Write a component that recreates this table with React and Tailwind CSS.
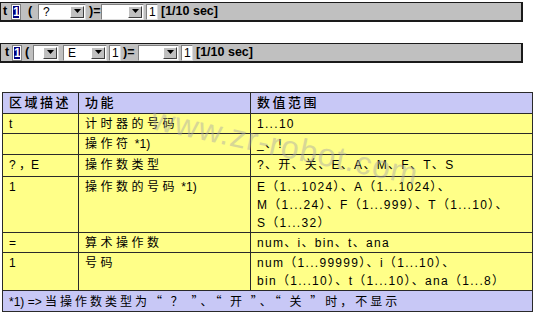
import React from 'react';

const Arrow = () => (
  <svg width="7" height="6" viewBox="0 0 7 6">
    <path d="M0 0h7L3.5 4z" fill="#000" />
  </svg>
);

function Combo({ className, children }) {
  return (
    <div className={`flex h-[16px] bg-white border border-[#808080] border-r-[#dcdcdc] border-b-[#dcdcdc] ${className}`}>
      <div className="flex-1 pl-[4px] text-[12px] leading-[14px] font-normal">{children}</div>
      <div className="w-[14px] my-[1px] mr-[1px] bg-[#c0c0c0] border border-t-white border-l-white border-r-[#404040] border-b-[#404040] flex items-center justify-center">
        <Arrow />
      </div>
    </div>
  );
}

function Num({ className, selected }) {
  if (selected) {
    return (
      <div className={`h-[16px] w-[10px] border border-[#808080] bg-white p-[1px] ${className}`}>
        <div className="h-full bg-[#000080] text-white text-[12px] leading-[12px] font-bold text-center">1</div>
      </div>
    );
  }
  return (
    <div className={`h-[16px] w-[12px] border border-[#808080] border-r-[#dcdcdc] border-b-[#dcdcdc] bg-white text-[12px] leading-[14px] font-normal pl-[2px] ${className}`}>
      1
    </div>
  );
}

function Bar({ children, className }) {
  return (
    <div className={`w-[523px] h-[20px] bg-[#c0c0c0] border border-[#1a1a1a] border-r-2 border-b-2 flex items-center font-bold text-[12.5px] text-black ${className}`}>
      {children}
    </div>
  );
}

// Latin glyphs from Liberation Sans, CJK and full-width punctuation fall back to Noto
const mix = '[font-family:"Liberation_Sans","Noto_Sans_CJK_SC",sans-serif]';
const cjk = '[font-family:"Noto_Sans_CJK_SC",sans-serif]';
const zh = 'tracking-[3.5px]';

const rows = [
  { a: 't', b: <span className={zh}>计时器的号码</span>, c: ['1...10'], h: 'h-[20px]' },
  { a: '', b: <><span className={zh}>操作符</span> *1)</>, c: ['_、!'], h: 'h-[21px]' },
  { a: '? ，E', b: <span className={zh}>操作数类型</span>, c: ['?、开、关、E、A、M、F、T、S'], h: 'h-[22px]' },
  {
    a: '1',
    b: <><span className={zh}>操作数的号码</span> *1)</>,
    c: ['E（1...1024）、A（1...1024）、', 'M（1...24）、F（1...999）、T（1...10）、', 'S（1...32）'],
    h: 'h-[55px]',
  },
  { a: '=', b: <span className={zh}>算术操作数</span>, c: ['num、i、bin、t、ana'], h: 'h-[20px]' },
  {
    a: '1',
    b: <span className={zh}>号码</span>,
    c: ['num（1...99999）、i（1...10）、', 'bin（1...10）、t（1...10）、ana（1...8）'],
    h: 'h-[38px]',
  },
];

export default function App() {
  return (
    <div className="relative w-[540px] h-[317px] bg-white overflow-hidden font-['Liberation_Sans',Arial,sans-serif] text-black">
      <Bar className="mt-[2px]">
        <span className="ml-[2px] w-[8px]">t</span>
        <Num selected />
        <span className="ml-[7px] w-[10px]">(</span>
        <Combo className="w-[48px]">?</Combo>
        <span className="ml-[3px] w-[12px]">)=</span>
        <Combo className="w-[43px]" />
        <Num className="ml-[2px]" />
        <span className="ml-[3px]">[1/10 sec]</span>
      </Bar>

      <Bar className="mt-[21px]">
        <span className="ml-[4px] w-[7px]">t</span>
        <Num selected />
        <span className="ml-[3px] w-[8px]">(</span>
        <Combo className="w-[26px]" />
        <Combo className="ml-[4px] w-[44px]">E</Combo>
        <Num className="ml-[2px]" />
        <span className="ml-[2px] w-[15px]">)=</span>
        <Combo className="w-[41px]" />
        <Num className="ml-[2px]" />
        <span className="ml-[3px]">[1/10 sec]</span>
      </Bar>

      <table className={`mt-[29px] ml-[2px] w-[530px] table-fixed border-collapse border-[1.5px] border-[#2a2a2a] text-[12px] ${mix}`}>
        <colgroup>
          <col className="w-[76px]" />
          <col className="w-[172px]" />
          <col className="w-[282px]" />
        </colgroup>
        <thead>
          <tr className="h-[21px] bg-[#c8c8f6]">
            <th className="border border-[#2a2a2a] px-[6px] text-left align-middle font-medium text-[13px] tracking-[2.5px]">区域描述</th>
            <th className="border border-[#2a2a2a] px-[6px] text-left align-middle font-medium text-[13px] tracking-[2.5px]">功能</th>
            <th className="border border-[#2a2a2a] px-[6px] text-left align-middle font-medium text-[13px] tracking-[2.5px]">数值范围</th>
          </tr>
        </thead>
        <tbody>
          {rows.map((r, i) => (
            <tr key={i} className={`${r.h} bg-[#ffff88]`}>
              <td className="border border-[#2a2a2a] px-[6px] pt-[1px] align-top leading-[18px]">{r.a}</td>
              <td className="border border-[#2a2a2a] px-[6px] pt-[1px] align-top leading-[18px] whitespace-nowrap">{r.b}</td>
              <td className="border border-[#2a2a2a] px-[6px] pt-[1px] align-top leading-[18px] tracking-[1.3px]">
                {r.c.map((l, j) => (
                  <div key={j} className="whitespace-nowrap">{l}</div>
                ))}
              </td>
            </tr>
          ))}
          <tr className="h-[21px] bg-[#c8c8f6]">
            <td colSpan={3} className="border border-[#2a2a2a] px-[6px] align-middle whitespace-nowrap">
              *1) =&gt; <span className={`tracking-[3px] ${cjk}`}>当操作数类型为“ ？ ”、“ 开 ”、“ 关 ”时，不显示</span>
            </td>
          </tr>
        </tbody>
      </table>

      <div className="absolute left-[152px] top-[94px] rotate-[12deg] origin-left pointer-events-none text-[32px] tracking-[1px] text-[#a8a8a8] opacity-45 font-['Liberation_Sans',sans-serif]">
        www.zr-robot.com
      </div>
    </div>
  );
}
